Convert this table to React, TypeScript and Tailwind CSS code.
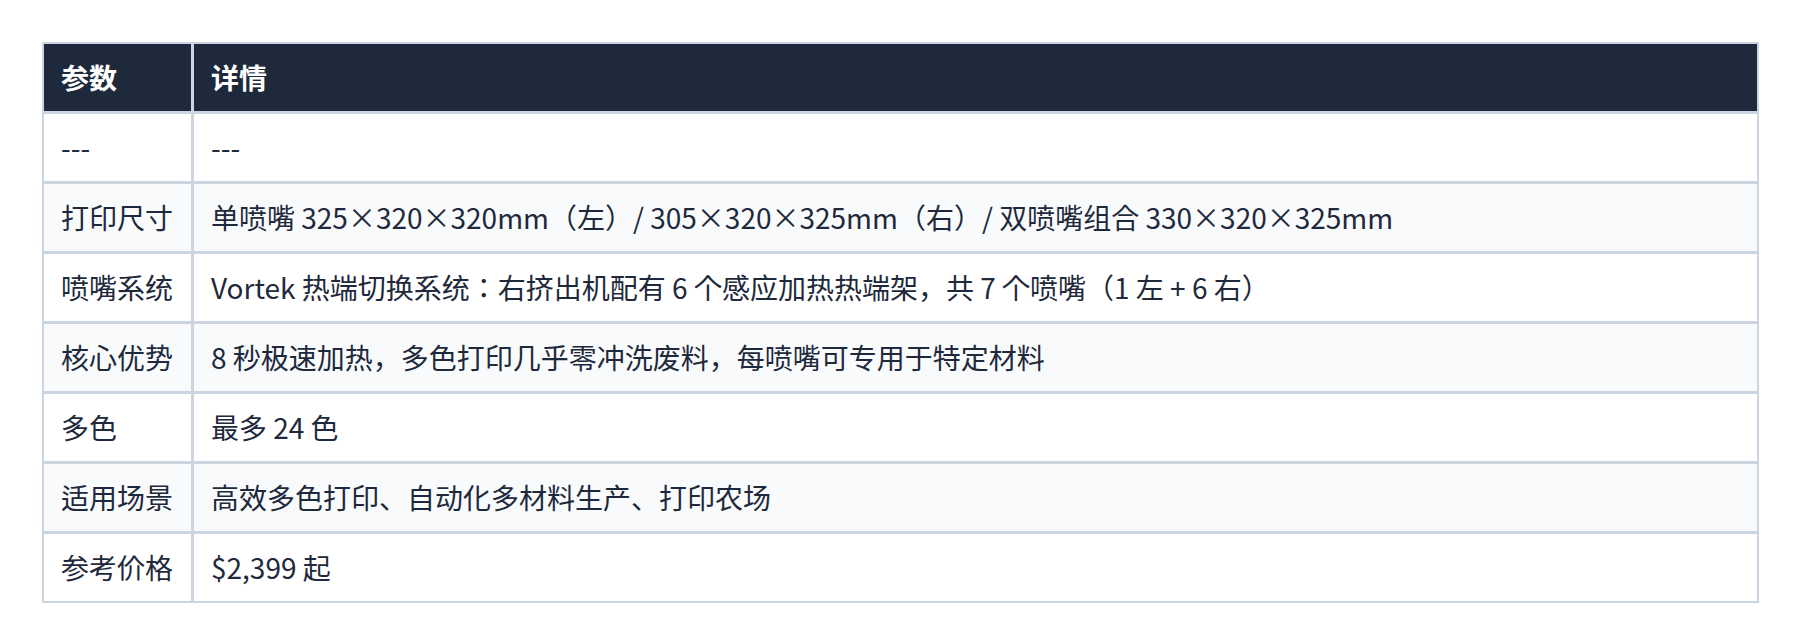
import React from 'react'

type Row = { param: string; detail: string }

const rows: Row[] = [
  { param: '---', detail: '---' },
  { param: '打印尺寸', detail: '单喷嘴 325×320×320mm（左）/ 305×320×325mm（右）/ 双喷嘴组合 330×320×325mm' },
  { param: '喷嘴系统', detail: 'Vortek 热端切换系统：右挤出机配有 6 个感应加热热端架，共 7 个喷嘴（1 左 + 6 右）' },
  { param: '核心优势', detail: '8 秒极速加热，多色打印几乎零冲洗废料，每喷嘴可专用于特定材料' },
  { param: '多色', detail: '最多 24 色' },
  { param: '适用场景', detail: '高效多色打印、自动化多材料生产、打印农场' },
  { param: '参考价格', detail: '$2,399 起' },
]

export default function App() {
  return (
    <div
      className="min-h-[644px] w-full bg-white pt-[42px] pl-[42px]"
      style={{ fontFamily: '"Noto Sans CJK JP", "Noto Sans CJK SC", "Noto Sans", sans-serif' }}
    >
      <div className="w-[1717px] border-2 border-[#cbd5e1]">
        <table className="w-full table-fixed border-separate border-spacing-0 text-[28px]">
          <thead>
            <tr className="bg-[#1e293b] text-white">
              <th className="w-[150px] border-r-[3px] border-b-[3px] border-[#cbd5e1] h-[70px] pl-[17px] text-left font-bold leading-[37px]">
                参数
              </th>
              <th className="border-b-[3px] border-[#cbd5e1] h-[70px] pl-[17px] text-left font-bold leading-[37px]">
                详情
              </th>
            </tr>
          </thead>
          <tbody className="text-[#1e293b]">
            {rows.map((r, i) => {
              const last = i === rows.length - 1
              const bg = i % 2 === 1 ? 'bg-[#f8fafc]' : 'bg-white'
              return (
                <tr key={i} className={bg}>
                  <td
                    className={`border-r-[3px] border-[#cbd5e1] pl-[17px] leading-[37px] whitespace-nowrap ${
                      last ? 'h-[67px]' : 'h-[70px] border-b-[3px]'
                    }`}
                  >
                    {r.param}
                  </td>
                  <td
                    className={`border-[#cbd5e1] pl-[17px] leading-[37px] whitespace-nowrap ${
                      last ? 'h-[67px]' : 'h-[70px] border-b-[3px]'
                    }`}
                  >
                    {r.detail}
                  </td>
                </tr>
              )
            })}
          </tbody>
        </table>
      </div>
    </div>
  )
}
